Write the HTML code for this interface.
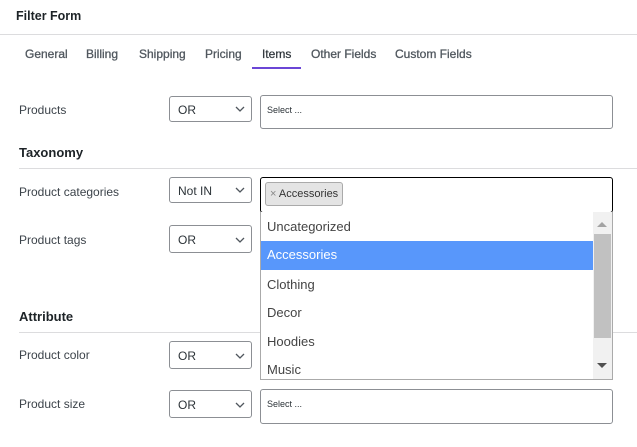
<!DOCTYPE html>
<html><head><style>
body{margin:0;width:637px;height:447px;background:#fff;font-family:"Liberation Sans",sans-serif;color:#3c434a;position:relative;overflow:hidden;font-size:12px}
.a{position:absolute;white-space:nowrap}
.h{font-weight:bold;font-size:13px;color:#1d2327}
.line{position:absolute;height:1px;background:#dcdcde}
.sel{position:absolute;left:169px;height:26px;border:1px solid #8c8f94;border-radius:3px;box-sizing:border-box;width:83px}
.sel span{position:absolute;left:8px;top:6px;font-size:12px;color:#2c3338}
.sel svg{position:absolute;right:6px;top:9px}
.inp{position:absolute;left:260px;width:353px;border:1px solid #8c8f94;border-radius:3px;box-sizing:border-box}
.inp span{position:absolute;left:6px;top:9px;font-size:9px;color:#2c3338}
.tab{position:absolute;top:47px;font-size:12px;color:#50575e;-webkit-text-stroke:0.3px #50575e}
.it{position:absolute;left:0;width:331px;height:28.6px;line-height:28.6px;padding-left:6px;font-size:13px;color:#444}
</style></head><body>
<div class="a h" style="left:16px;top:9px;font-size:12.5px">Filter Form</div>
<div class="line" style="left:0;top:34px;width:637px"></div>
<div class="tab" style="left:25px">General</div>
<div class="tab" style="left:86px">Billing</div>
<div class="tab" style="left:139px">Shipping</div>
<div class="tab" style="left:205px">Pricing</div>
<div class="tab" style="left:262px;color:#1d2327">Items</div>
<div class="tab" style="left:311px">Other Fields</div>
<div class="tab" style="left:395px">Custom Fields</div>
<div class="a" style="left:252px;top:67px;width:49px;height:2px;background:#6b46d6"></div>

<div class="a" style="left:19px;top:103px">Products</div>
<div class="sel" style="top:96px"><span>OR</span><svg width="10" height="6"><path d="M1 1l4 4 4-4" stroke="#50575e" fill="none" stroke-width="1.3"/></svg></div>
<div class="inp" style="top:95px;height:34px"><span>Select ...</span></div>

<div class="a h" style="left:19px;top:145px">Taxonomy</div>
<div class="line" style="left:19px;top:168px;width:618px"></div>
<div class="a" style="left:19px;top:185px">Product categories</div>
<div class="sel" style="top:177px"><span>Not IN</span><svg width="10" height="6"><path d="M1 1l4 4 4-4" stroke="#50575e" fill="none" stroke-width="1.3"/></svg></div>
<div class="a" style="left:19px;top:233px">Product tags</div>
<div class="sel" style="top:225px;height:28px"><span style="top:7px">OR</span><svg width="10" height="6" style="top:11px"><path d="M1 1l4 4 4-4" stroke="#50575e" fill="none" stroke-width="1.3"/></svg></div>

<div class="a h" style="left:19px;top:309px">Attribute</div>
<div class="line" style="left:19px;top:332px;width:618px"></div>
<div class="a" style="left:19px;top:348px">Product color</div>
<div class="sel" style="top:341px;height:28px"><span style="top:7px">OR</span><svg width="10" height="6" style="top:11px"><path d="M1 1l4 4 4-4" stroke="#50575e" fill="none" stroke-width="1.3"/></svg></div>
<div class="a" style="left:19px;top:397px">Product size</div>
<div class="sel" style="top:390px;height:28px"><span style="top:7px">OR</span><svg width="10" height="6" style="top:11px"><path d="M1 1l4 4 4-4" stroke="#50575e" fill="none" stroke-width="1.3"/></svg></div>
<div class="inp" style="top:389px;height:35px"><span>Select ...</span></div>

<div class="a" style="left:260px;top:177px;width:353px;height:36px;border:1px solid #000;border-radius:3px;box-sizing:border-box;background:#fff">
<div class="a" style="left:4px;top:4px;height:22px;padding:0 4px;border:1px solid #aaa;border-radius:3px;background:#e4e4e4;line-height:22px;font-size:11px;color:#333"><span style="color:#888">×</span> Accessories</div></div>
<div class="a" style="left:260px;top:212px;width:353px;height:168px;border:1px solid #aaa;border-top:none;box-sizing:border-box;background:#fff;overflow:hidden">
<div class="it" style="top:1px">Uncategorized</div>
<div class="it" style="top:29px;background:#5897fb;color:#fff">Accessories</div>
<div class="it" style="top:58.5px">Clothing</div>
<div class="it" style="top:87px">Decor</div>
<div class="it" style="top:115.5px">Hoodies</div>
<div class="it" style="top:144px">Music</div>
<div class="a" style="left:332px;top:0;width:19px;height:167px;background:#f1f1f1"></div>
<div class="a" style="left:333px;top:22px;width:17px;height:104px;background:#c1c1c1"></div>
<svg class="a" style="left:336px;top:9px" width="10" height="6"><path d="M0 6L5 1L10 6Z" fill="#a3a3a3"/></svg>
<svg class="a" style="left:336px;top:151px" width="10" height="6"><path d="M0 0L5 5L10 0Z" fill="#505050"/></svg>
</div>
</body></html>
